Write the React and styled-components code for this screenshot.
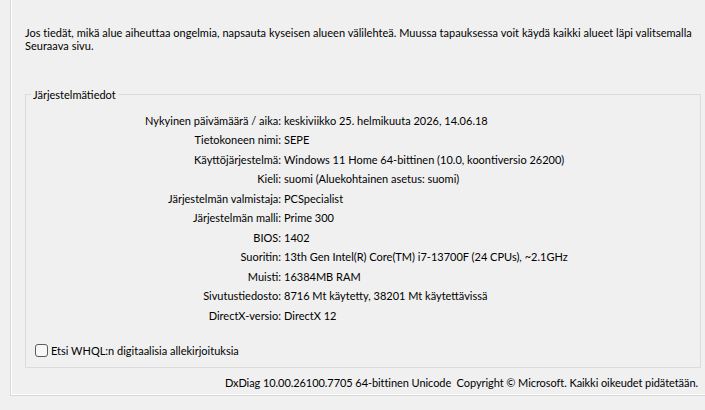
import React from "react";
import styled, { createGlobalStyle } from "styled-components";

const GlobalStyle = createGlobalStyle`
  html, body {
    margin: 0;
    padding: 0;
    background: #f0f0f0;
  }

  body {
    font-family: Lato, "Liberation Sans", sans-serif;
    font-size: 11px;
    color: #000;
  }
`;

const Window = styled.div`
  box-sizing: border-box;
  width: 705px;
  height: 410px;
  overflow: hidden;
  padding-left: 10px;
  background: #f0f0f0;
`;

const TabPage = styled.div`
  box-sizing: border-box;
  width: 720px;
  height: 396px;
  padding-left: 14px;
  border-left: 1px solid #d9d9d9;
  border-bottom: 1px solid #d9d9d9;
  box-shadow: inset 1px 0 0 #fff, inset 0 -1px 0 #fff;
  display: flex;
  flex-direction: column;
`;

// the page title sits mostly above the visible area, only descenders show
const Heading = styled.div`
  margin-top: -13px;
  height: 14px;
  line-height: 14px;
  font-weight: bold;
  white-space: nowrap;
`;

const Intro = styled.p`
  width: 672px;
  margin: 25px 0 0;
  line-height: 13px;
  letter-spacing: 0.02px;
`;

const Content = styled.div`
  width: 676px;
`;

const GroupBox = styled.fieldset`
  box-sizing: border-box;
  width: 676px;
  margin: 36px 0 0;
  padding: 9.5px 0 10px 5px;
  border: 1px solid #dcdcdc;
  min-inline-size: 0;

  legend {
    padding: 0 2px;
    line-height: 13px;
  }
`;

const Row = styled.div`
  display: grid;
  grid-template-columns: 250px 1fr;
  column-gap: 3px;
  align-items: center;
  height: 19.5px;
  white-space: nowrap;
`;

const Label = styled.span`
  text-align: right;
`;

const CheckRow = styled.label`
  display: flex;
  align-items: center;
  gap: 3px;
  height: 13px;
  margin: 18.5px 0 0 4px;
  line-height: 13px;
`;

const Check = styled.input.attrs({ type: "checkbox" })`
  appearance: none;
  box-sizing: border-box;
  width: 13px;
  height: 13px;
  margin: 0;
  border: 1px solid #5c5c5c;
  border-radius: 3px;
  background: #f7f7f7;
`;

const Footer = styled.div`
  margin-top: 8px;
  padding-right: 3px;
  line-height: 13px;
  letter-spacing: -0.07px;
  text-align: right;
  white-space: pre;
`;

const info = [
  ["Nykyinen päivämäärä / aika:", "keskiviikko 25. helmikuuta 2026, 14.06.18"],
  ["Tietokoneen nimi:", "SEPE"],
  ["Käyttöjärjestelmä:", "Windows 11 Home 64-bittinen (10.0, koontiversio 26200)"],
  ["Kieli:", "suomi (Aluekohtainen asetus: suomi)"],
  ["Järjestelmän valmistaja:", "PCSpecialist"],
  ["Järjestelmän malli:", "Prime 300"],
  ["BIOS:", "1402"],
  ["Suoritin:", "13th Gen Intel(R) Core(TM) i7-13700F (24 CPUs), ~2.1GHz"],
  ["Muisti:", "16384MB RAM"],
  ["Sivutustiedosto:", "8716 Mt käytetty, 38201 Mt käytettävissä"],
  ["DirectX-versio:", "DirectX 12"],
];

export default function App() {
  return (
    <>
      <GlobalStyle />
      <Window>
        <TabPage>
          <Heading>
            Tämä työkalu raportoi yksityiskohtaisia tietoja järjestelmääsi asennetuista
            DirectX-komponenteista ja -ohjaimista.
          </Heading>
          <Intro>
            Jos tiedät, mikä alue aiheuttaa ongelmia, napsauta kyseisen alueen välilehteä.
            Muussa tapauksessa voit käydä kaikki alueet läpi valitsemalla Seuraava sivu.
          </Intro>
          <Content>
            <GroupBox>
              <legend>Järjestelmätiedot</legend>
              {info.map(([label, value]) => (
                <Row key={label}>
                  <Label>{label}</Label>
                  <span>{value}</span>
                </Row>
              ))}
              <CheckRow>
                <Check />
                Etsi WHQL:n digitaalisia allekirjoituksia
              </CheckRow>
            </GroupBox>
            <Footer>
              {"DxDiag 10.00.26100.7705 64-bittinen Unicode  Copyright © Microsoft. Kaikki oikeudet pidätetään."}
            </Footer>
          </Content>
        </TabPage>
      </Window>
    </>
  );
}
